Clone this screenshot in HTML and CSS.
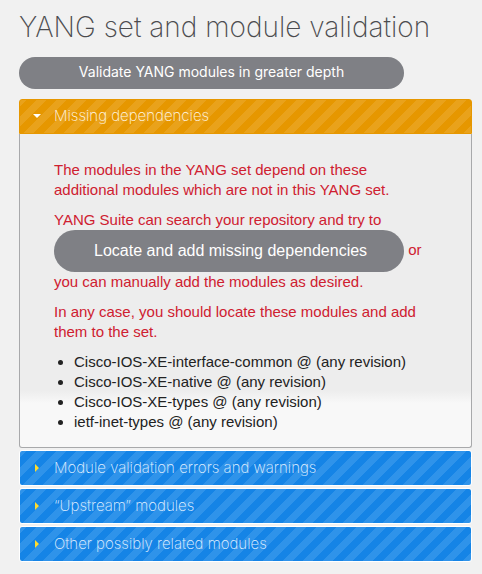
FILE: index.html
```html
<!DOCTYPE html>
<html lang="en">
<head>
<meta charset="utf-8">
<meta name="viewport" content="width=device-width, initial-scale=1">
<title>YANG set and module validation</title>
<link rel="stylesheet" href="styles.css">
</head>
<body>
<main>
  <h1>YANG set and module validation</h1>
  <button type="button" class="btn btn-validate">Validate YANG modules in greater depth</button>
  <div class="accordion">
    <section class="item">
      <h2><button type="button" class="bar bar-active" aria-expanded="true" aria-controls="missing"><svg class="arrow" viewBox="0 0 8 8" aria-hidden="true"><path d="M0 2H8L4 6Z"/></svg>Missing dependencies</button></h2>
      <div class="panel" id="missing">
        <p>The modules in the YANG set depend on these additional modules which are not in this YANG set.</p>
        <p>YANG Suite can search your repository and try to <button type="button" class="btn btn-locate">Locate and add missing dependencies</button> or you can manually add the modules as desired.</p>
        <p>In any case, you should locate these modules and add them to the set.</p>
        <ul>
          <li>Cisco-IOS-XE-interface-common @ (any revision)</li>
          <li>Cisco-IOS-XE-native @ (any revision)</li>
          <li>Cisco-IOS-XE-types @ (any revision)</li>
          <li>ietf-inet-types @ (any revision)</li>
        </ul>
      </div>
    </section>
    <section class="item">
      <h2><button type="button" class="bar" aria-expanded="false"><svg class="arrow" viewBox="0 0 8 8" aria-hidden="true"><path d="M2 0L6 4L2 8Z"/></svg>Module validation errors and warnings</button></h2>
    </section>
    <section class="item">
      <h2><button type="button" class="bar" aria-expanded="false"><svg class="arrow" viewBox="0 0 8 8" aria-hidden="true"><path d="M2 0L6 4L2 8Z"/></svg>“Upstream” modules</button></h2>
    </section>
    <section class="item">
      <h2><button type="button" class="bar" aria-expanded="false"><svg class="arrow" viewBox="0 0 8 8" aria-hidden="true"><path d="M2 0L6 4L2 8Z"/></svg>Other possibly related modules</button></h2>
    </section>
  </div>
</main>
</body>
</html>
```
FILE: styles.css
```css
* { box-sizing: border-box; }

body {
  margin: 0;
  background: #f1f1f1;
  color: #222;
  font: 15px/20px "Liberation Sans", Arial, sans-serif;
}

main { padding: 8px 10px 12px 19px; }

h1 {
  margin: 0 0 9px;
  color: #4c4c4f;
  font: 200 28px/38px Inter, sans-serif;
  padding-bottom: 2px;
  white-space: nowrap;
}

h2 { margin: 0; font: inherit; }

.btn {
  border: 0;
  border-radius: 21px;
  background: #7f8085;
  color: #fff;
  cursor: pointer;
}

.btn-validate {
  display: block;
  width: 85%;
  height: 32px;
  margin-bottom: 10px;
  padding: 0 16px 2px;
  font: 400 14px/20px Inter, sans-serif;
}

.btn-locate {
  height: 42px;
  padding: 0 37px 0 40px;
  font: 16px/20px "Liberation Sans", Arial, sans-serif;
  vertical-align: middle;
}

.accordion {
  display: flex;
  flex-direction: column;
  gap: 2px;
}

.bar {
  --light: #2f93ea;
  --dark: #1584e6;
  display: flex;
  align-items: center;
  gap: 13px;
  width: 100%;
  height: 36px;
  padding: 0 13px 1px;
  border: 1px solid #fff;
  border-radius: 3px;
  background: linear-gradient(135deg, var(--light) 25%, var(--dark) 25% 50%, var(--light) 50% 75%, var(--dark) 75%) -3px 0 / 20px 20px;
  color: #e2f1ff;
  font: 200 15px/20px Inter, sans-serif;
  text-align: left;
  cursor: pointer;
}

.bar-active {
  --light: #e9a21b;
  --dark: #e69700;
  height: 35px;
  border-color: #e69700;
  border-radius: 3px 3px 0 0;
  color: #fff8e8;
}

.arrow {
  flex: none;
  width: 8px;
  height: 8px;
  fill: #ffdc2e;
}

.bar-active .arrow { fill: #fff; }

.panel {
  padding: 26px 44px 15px 34px;
  border: 1px solid #a8a9ab;
  border-top: 0;
  border-radius: 0 0 3px 3px;
  background: linear-gradient(#ededed 0 82%, #f8f8f8 86%);
}

.panel p {
  margin: 0 0 10px;
  color: #cf2030;
}

.panel ul { margin: 0; padding-left: 20px; }
```
